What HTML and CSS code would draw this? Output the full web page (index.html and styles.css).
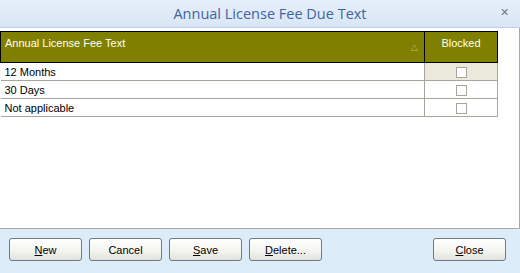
FILE: index.html
```html
<!DOCTYPE html>
<html lang="en">

<head>
  <meta charset="UTF-8">
  <title>Annual License Fee Due Text</title>
  <link rel="stylesheet" href="styles.css">
</head>

<body>
  <div class="window">
    <!--标题栏-->
    <div class="titlebar">
      <span class="title">Annual License Fee Due Text</span>
      <span class="close-x">&#x2715;</span>
    </div>
    <!--表格区域-->
    <div class="grid-area">
      <table class="grid">
        <thead>
          <tr>
            <th class="col-text">Annual License Fee Text<span class="sort">&#x25B3;</span></th>
            <th class="col-blocked">Blocked</th>
          </tr>
        </thead>
        <tbody>
          <tr class="current">
            <td>12 Months</td>
            <td class="chk"><span class="box"></span></td>
          </tr>
          <tr>
            <td>30 Days</td>
            <td class="chk"><span class="box"></span></td>
          </tr>
          <tr>
            <td>Not applicable</td>
            <td class="chk"><span class="box"></span></td>
          </tr>
        </tbody>
      </table>
    </div>
    <!--按钮-->
    <div class="buttons">
      <button><u>N</u>ew</button>
      <button>Cancel</button>
      <button><u>S</u>ave</button>
      <button><u>D</u>elete...</button>
      <button class="right"><u>C</u>lose</button>
    </div>
  </div>
</body>

</html>
```

FILE: styles.css
```css
* {
  margin: 0;
  padding: 0
}

body {
  width: 520px;
  height: 273px;
  overflow: hidden;
  font-family: "Liberation Sans", Arial, sans-serif;
  font-size: 11px;
}

.window {
  width: 520px;
  height: 273px;
  display: flex;
  flex-direction: column;
  background-color: #dcecf9;
}

.titlebar {
  height: 27px;
  flex-shrink: 0;
  border-bottom: 1px solid #bcd2ec;
  background: linear-gradient(#e6eff9, #d9e6f5);
  display: flex;
  align-items: center;
  justify-content: center;
  position: relative;
}

.title {
  font-family: "Open Sans", sans-serif;
  font-size: 14.5px;
  color: #4263a0;
  padding-left: 20px;
  margin-top: -1px;
}

.close-x {
  position: absolute;
  right: 11px;
  top: 6px;
  font-size: 11px;
  color: #6b7c94;
}

.grid-area {
  height: 197px;
  flex-shrink: 0;
  background-color: #fff;
  border-right: 1px solid #a9a9a9;
  border-bottom: 1px solid #a9a9a9;
  padding-top: 3px;
}

.grid {
  width: 498px;
  border-collapse: collapse;
}

.grid th {
  height: 25px;
  background-color: #808000;
  color: #fffff2;
  font-weight: normal;
  border: 1px solid #000;
  vertical-align: top;
  padding-top: 5px;
}

.grid th.col-text {
  width: 419px;
  text-align: left;
  padding-left: 4px;
  position: relative;
}

.sort {
  position: absolute;
  right: 6px;
  top: 10px;
  font-size: 9px;
  color: #b8b870;
}

.grid td {
  height: 17px;
  border-bottom: 1px solid #a7a59c;
  padding-left: 4px;
  vertical-align: middle;
}

.grid td.chk {
  border-left: 1px solid #a7a59c;
  border-right: 1px solid #a7a59c;
  text-align: center;
  padding-left: 0;
}

.grid tr.current td.chk {
  background-color: #ebe9dc;
}

.box {
  display: inline-block;
  width: 9px;
  height: 9px;
  border: 1px solid #a7a59c;
  background-color: #fff;
  vertical-align: middle;
}

.buttons {
  flex: 1;
  display: flex;
  gap: 7px;
  padding: 9px 0 0 9px;
}

.buttons button {
  box-sizing: border-box;
  width: 73px;
  height: 23px;
  border: 1px solid #6f7b8a;
  border-radius: 3px;
  background: linear-gradient(#ffffff, #f3f3ef 60%, #e2e2dc);
  font-family: "Liberation Sans", Arial, sans-serif;
  font-size: 11px;
  color: #000;
}

.buttons button.right {
  margin-left: auto;
  margin-right: 14px;
}
```
